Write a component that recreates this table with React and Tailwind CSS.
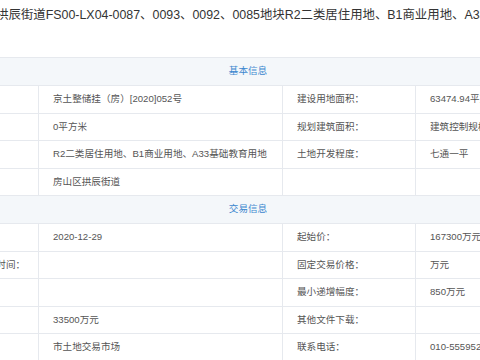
import React from 'react';

const basicRows = [
  ['编号：', '京土整储挂（房）[2020]052号', '建设用地面积：', '63474.94平方米'],
  ['面积：', '0平方米', '规划建筑面积：', '建筑控制规模详见规划条件'],
  ['用途：', 'R2二类居住用地、B1商业用地、A33基础教育用地', '土地开发程度：', '七通一平'],
  ['位置：', '房山区拱辰街道', '', ''],
];

const tradeRows = [
  ['日期：', '2020-12-29', '起始价：', '167300万元'],
  ['挂牌截止时间：', '', '固定交易价格：', '万元'],
  ['最高限价：', '', '最小递增幅度：', '850万元'],
  ['保证金：', '33500万元', '其他文件下载：', ''],
  ['地点：', '市土地交易市场', '联系电话：', '010-55595211'],
];

const Band = ({ title }) => (
  <div className="col-span-4 h-[28px] flex items-center justify-center bg-[#f4f7fa] border-b border-[#e6e9ee] text-[#3d87cf]">
    {title}
  </div>
);

const Row = ({ cells }) => (
  <>
    {cells.map((c, i) => (
      <div
        key={i}
        className={`h-[27.5px] flex items-center px-[14px] whitespace-nowrap border-b border-[#e6e9ee] ${i > 0 ? 'border-l' : ''}`}
      >
        {c}
      </div>
    ))}
  </>
);

export default function App() {
  return (
    <div
      className="w-[480px] h-[360px] overflow-hidden bg-white"
      style={{ fontFamily: '"Liberation Sans", "Noto Sans CJK SC", sans-serif' }}
    >
      <div className="h-[57px] pt-[7px]">
        <div className="ml-[-41px] whitespace-nowrap text-[12.4px] leading-[16px] text-[#333]">
          房山区拱辰街道FS00-LX04-0087、0093、0092、0085地块R2二类居住用地、B1商业用地、A33基础教育用地（配建“保障性住房”）
        </div>
      </div>
      <div className="ml-[-56px] w-[608px] grid grid-cols-[94px_244px_133px_137px] border-t border-[#e6e9ee] text-[9.6px] text-[#555]">
        <Band title="基本信息" />
        {basicRows.map((r, i) => (
          <Row key={i} cells={r} />
        ))}
        <Band title="交易信息" />
        {tradeRows.map((r, i) => (
          <Row key={i} cells={r} />
        ))}
      </div>
    </div>
  );
}
